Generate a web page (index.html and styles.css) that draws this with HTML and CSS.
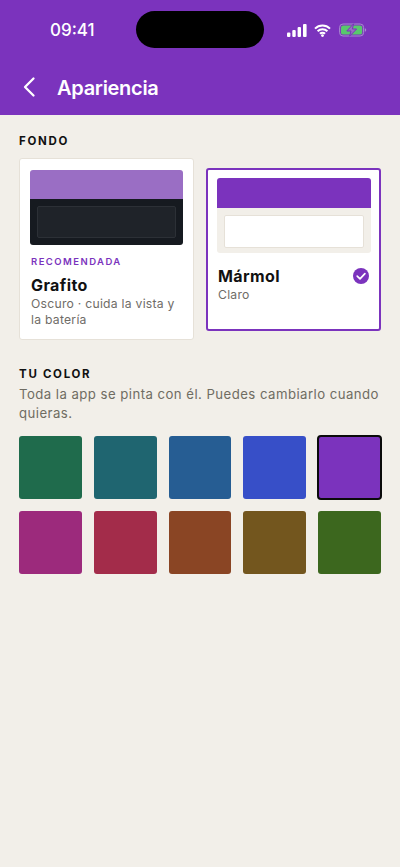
FILE: index.html
```html
<!DOCTYPE html>
<html lang="es">
<head>
<meta charset="utf-8">
<title>Apariencia</title>
<link rel="stylesheet" href="styles.css">
</head>
<body>
<div class="screen">
  <header class="appbar">
    <div class="status">
      <span class="time">09:41</span>
      <span class="island"></span>
      <span class="status-icons">
        <svg class="signal" width="20" height="13" viewBox="0 0 20 13"><rect x="0" y="8.5" width="3.4" height="4.5" rx="1" fill="#fff"/><rect x="5.3" y="6" width="3.4" height="7" rx="1" fill="#fff"/><rect x="10.6" y="3" width="3.4" height="10" rx="1" fill="#fff"/><rect x="16" y="0" width="3.6" height="13" rx="1" fill="#fff"/></svg>
        <svg class="wifi" width="17" height="13" viewBox="0 0 17 13"><path d="M1 4.6a10.6 10.6 0 0 1 15 0M3.6 7.3a7 7 0 0 1 9.8 0M6 9.8a3.4 3.4 0 0 1 5 0" fill="none" stroke="#fff" stroke-width="2"/><circle cx="8.5" cy="11.6" r="1.4" fill="#fff"/></svg>
        <svg class="battery" width="28" height="14" viewBox="0 0 28 14"><rect x="0.6" y="1" width="24" height="12" rx="3.4" fill="none" stroke="#a98ad0" stroke-width="1"/><rect x="2" y="2.4" width="21.2" height="9.2" rx="2.2" fill="#58c96c"/><path d="M25.8 5.2c1 .3 1.4 1 1.4 1.8s-.4 1.5-1.4 1.8z" fill="#a98ad0"/><path d="M14.6 0.8 7.8 8h4.2l-1.4 5.2L17.6 6h-4.2z" fill="#9a6ec4" stroke="#7b33bd" stroke-width="1"/></svg>
      </span>
    </div>
    <div class="nav">
      <svg class="back" width="14" height="22" viewBox="0 0 14 22"><path d="M11.5 2.5 3 11l8.5 8.5" fill="none" stroke="#fff" stroke-width="2.3" stroke-linecap="round" stroke-linejoin="round"/></svg>
      <h1 class="title">Apariencia</h1>
    </div>
  </header>
  <main class="content">
    <h2 class="label">FONDO</h2>
    <section class="cards">
      <article class="card">
        <div class="preview">
          <div class="preview-top tint"></div>
          <div class="preview-bottom dark"><div class="preview-inner inner-dark"></div></div>
        </div>
        <div class="tag">RECOMENDADA</div>
        <div class="card-name">Grafito</div>
        <div class="card-desc">Oscuro · cuida la vista y la batería</div>
      </article>
      <article class="card selected">
        <div class="preview">
          <div class="preview-top solid"></div>
          <div class="preview-bottom light"><div class="preview-inner inner-light"></div></div>
        </div>
        <div class="name-row">
          <div class="card-name">Mármol</div>
          <svg class="check" width="16" height="16" viewBox="0 0 16 16"><circle cx="8" cy="8" r="8" fill="#7b33bd"/><path d="M4.2 8.2 7 10.8l4.9-5.2" fill="none" stroke="#fff" stroke-width="1.7" stroke-linecap="round" stroke-linejoin="round"/></svg>
        </div>
        <div class="card-desc">Claro</div>
      </article>
    </section>
    <h2 class="label second">TU COLOR</h2>
    <p class="hint">Toda la app se pinta con él. Puedes cambiarlo cuando quieras.</p>
    <section class="swatches">
      <div class="swatch c1"></div>
      <div class="swatch c2"></div>
      <div class="swatch c3"></div>
      <div class="swatch c4"></div>
      <div class="swatch c5 active"></div>
      <div class="swatch c6"></div>
      <div class="swatch c7"></div>
      <div class="swatch c8"></div>
      <div class="swatch c9"></div>
      <div class="swatch c10"></div>
    </section>
  </main>
</div>
</body>
</html>
```
FILE: styles.css
```css
* { box-sizing: border-box; margin: 0; padding: 0; }
html, body { height: 100%; }
body { background: #f2efe9; font-family: Inter, "Liberation Sans", sans-serif; color: #111; }
.screen { width: 400px; min-height: 867px; background: #f2efe9; overflow: hidden; }
.appbar { height: 115px; background: #7b33bd; color: #fff; display: flex; flex-direction: column; }
.status { height: 60px; padding: 11px 0 0 50px; display: flex; align-items: flex-start; }
.time { width: 86px; font-size: 17px; font-weight: 500; line-height: 38px; }
.island { width: 128px; height: 37px; background: #000; border-radius: 19px; }
.status-icons { height: 37px; margin-left: 23px; display: flex; align-items: center; gap: 7px; padding-top: 1px; }
.battery { margin-left: 1px; }
.nav { height: 55px; padding: 0 0 0 22px; display: flex; align-items: center; }
.back { margin-bottom: 1px; }
.title { margin-left: 21px; font-size: 20px; font-weight: 600; letter-spacing: -0.3px; line-height: 24px; }
.content { padding: 19px 19px 0; }
.label { font-size: 11.5px; font-weight: 700; letter-spacing: 1.7px; line-height: 14px; color: #111; }
.label.second { margin-top: 27px; }
.cards { margin-top: 10px; display: grid; grid-template-columns: 175px 175px; column-gap: 12px; align-items: center; }
.card { background: #fff; border: 1px solid #e6e1d8; border-radius: 3px; padding: 11px 10px 11px; height: 182px; }
.card.selected { border: 2px solid #7b33bd; height: 163px; padding: 8px 8px 8px 9px; }
.preview { height: 75px; border-radius: 3px; overflow: hidden; display: flex; flex-direction: column; }
.preview-top { height: 30px; }
.preview-top.tint { background: #9a6ec4; }
.preview-top.solid { background: #7b33bd; }
.preview-bottom { flex: 1; padding: 7px; }
.preview-bottom.dark { background: #161a20; }
.preview-bottom.light { background: #f2efe9; padding: 7px 7px 5px; }
.preview-inner { height: 100%; border-radius: 2px; }
.inner-dark { background: #1f2329; border: 1px solid #2c3036; height: 32px; }
.inner-light { background: #fff; border: 1px solid #e6e1d8; }
.tag { margin-top: 11px; padding-left: 1px; font-size: 9.5px; font-weight: 600; letter-spacing: 1.45px; line-height: 12px; color: #7b33bd; }
.card-name { margin-top: 7px; padding-left: 1px; font-size: 16px; font-weight: 700; letter-spacing: 0.4px; line-height: 20px; color: #111; }
.name-row { margin-top: 13px; display: flex; align-items: center; justify-content: space-between; padding-right: 2px; }
.name-row .card-name { margin-top: 0; }
.card-desc { margin-top: 1px; padding-left: 1px; font-size: 12.2px; line-height: 16px; letter-spacing: 0.25px; color: #6f6c67; }
.hint { margin-top: 4px; font-size: 13.2px; line-height: 19px; letter-spacing: 0.45px; color: #6f6c62; }
.swatches { margin-top: 13px; display: grid; grid-template-columns: repeat(5, 1fr); gap: 12px; }
.swatch { aspect-ratio: 1; border-radius: 3px; }
.swatch.active { outline: 2.5px solid #0b0b0b; outline-offset: -1.5px; }
.c1 { background: #1f6b4c; }
.c2 { background: #1f6570; }
.c3 { background: #265d93; }
.c4 { background: #374fc8; }
.c5 { background: #7b33bd; }
.c6 { background: #9c2a7c; }
.c7 { background: #a32c4a; }
.c8 { background: #8a4524; }
.c9 { background: #73561e; }
.c10 { background: #3c671e; }
```
